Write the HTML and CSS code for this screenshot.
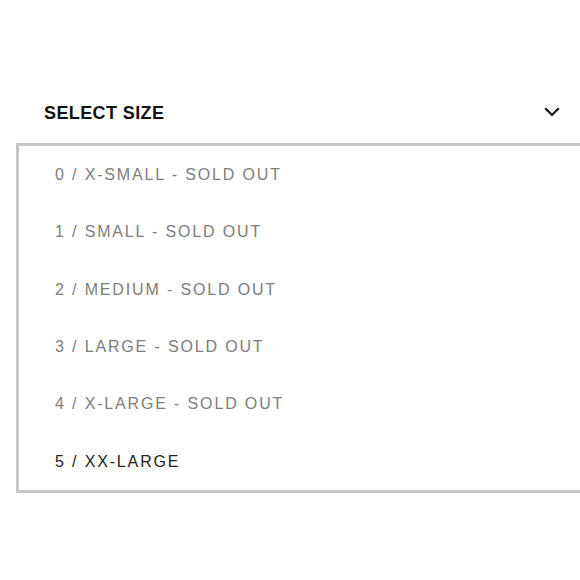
FILE: index.html
```html
<!DOCTYPE html>
<html>
<head>
<meta charset="utf-8">
<link rel="stylesheet" href="styles.css">
</head>
<body>
<div class="page">
  <div class="size-header">
    <span class="size-title">SELECT SIZE</span>
    <svg class="chevron" width="16" height="12" viewBox="0 0 16 12"><polyline points="2,3 8,9 14,3" fill="none" stroke="#111" stroke-width="2.2" stroke-linecap="square"/></svg>
  </div>
  <ul class="size-list">
    <li class="size-option sold">0 / X-SMALL - SOLD OUT</li>
    <li class="size-option sold">1 / SMALL - SOLD OUT</li>
    <li class="size-option sold">2 / MEDIUM - SOLD OUT</li>
    <li class="size-option sold">3 / LARGE - SOLD OUT</li>
    <li class="size-option sold">4 / X-LARGE - SOLD OUT</li>
    <li class="size-option">5 / XX-LARGE</li>
  </ul>
</div>
</body>
</html>
```
FILE: styles.css
```css
html, body {
  margin: 0;
  padding: 0;
  background: #fff;
  overflow: hidden;
}
.page {
  width: 580px;
  height: 580px;
  padding-top: 101px;
  box-sizing: border-box;
  font-family: "Liberation Sans", Arial, sans-serif;
}
.size-header {
  display: flex;
  justify-content: space-between;
  align-items: center;
  padding: 0 20px 0 44px;
  height: 24px;
}
.size-title {
  font-size: 18px;
  font-weight: bold;
  letter-spacing: 0.4px;
  color: #111;
  line-height: 24px;
}
.chevron {
  display: block;
  margin-top: -2px;
}
.size-list {
  list-style: none;
  margin: 18px 0 0 16px;
  padding: 0;
  border: 3px solid #c6c6c6;
  border-right: none;
}
.size-option {
  height: 57.33px;
  line-height: 57.33px;
  padding-left: 36px;
  font-size: 16px;
  letter-spacing: 1.85px;
  color: #222;
}
.size-option.sold {
  color: #7d7d7d;
}
```
